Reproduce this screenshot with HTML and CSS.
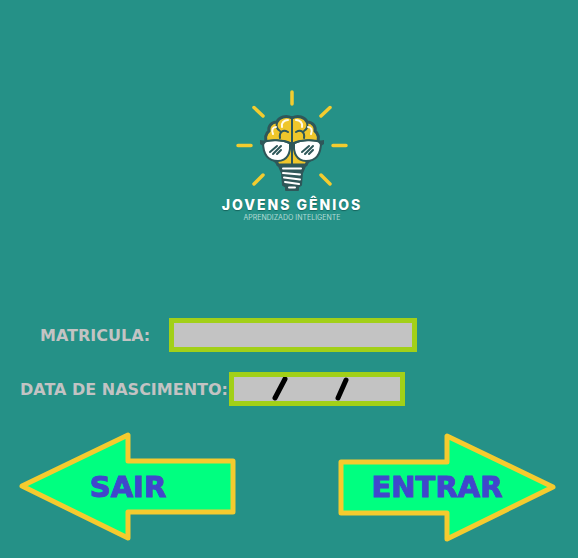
FILE: index.html
```html
<!DOCTYPE html>
<html lang="pt-BR">
<head>
<meta charset="utf-8">
<meta name="viewport" content="width=device-width, initial-scale=1">
<title>Jovens Gênios</title>
<link rel="stylesheet" href="styles.css">
</head>
<body>
<main class="page">
  <header class="brand">
    <svg class="brand-mark" viewBox="235 89 114 104" aria-hidden="true">
      <path class="rays" d="M292 92V104M254 107.500L263 116M330 107.500L321 116M238 145.500H251M333 145.500H346M254 184L263 175M330 184L321 175"/>
      <path class="brain" d="M292 118C286 115 279 117 277 122C271 122 268 127 269 131C265 134 265 139 267 144L272 159C275 160 277 162 278 165H306C307 162 309 160 312 159L317 144C319 139 319 134 315 131C316 127 313 122 307 122C305 117 298 115 292 118Z"/>
      <path class="fold" d="M292 117V165M288 132C283 129 279 132 280 138M277 123C276 126 277 129 280 131M296 132C301 129 305 132 304 138M307 123C308 126 307 129 304 131"/>
      <path class="shine" d="M282 127C281 123 284 120 288 120M273 134C271 130 273 127 276 127M296 120C300 120 303 123 302 127M308 127C311 127 313 130 311 134"/>
      <path class="base" d="M279 166H305L302 173L301 185L298 187V190H286V187L283 185L282 173Z"/>
      <path class="thread" d="M283 168.500H301M283 173L300 174.500M284 177.500L300 179.500M285 182L299 184"/>
      <path class="tip" d="M289 187.500H295"/>
      <path class="lens" d="M263 142C271 139 283 140 290 143C291 153 287 161 278 161C268 161 263 154 263 142Z"/>
      <path class="lens" d="M321 142C313 139 301 140 294 143C293 153 297 161 306 161C316 161 321 154 321 142Z"/>
      <path class="bridge" d="M260 140L266 141C273 139 284 139 290 142H294C300 139 311 139 318 141L324 140V144L321 146L318 142C309 140 300 141 295 144V149H289V144C284 141 275 140 266 142L263 146L260 144Z"/>
      <path class="glint" d="M270 152L277 146M273 154L281 146M277 154L281 150M302 152L309 146M305 154L313 146M309 154L313 150"/>
    </svg>
    <h1 class="brand-name">JOVENS GÊNIOS</h1>
    <p class="brand-tagline">APRENDIZADO INTELIGENTE</p>
  </header>
  <form class="login">
    <div class="row row-id">
      <label for="matricula">MATRICULA:</label>
      <input class="field field-id" id="matricula" type="text">
    </div>
    <div class="row row-date">
      <label for="nascimento">DATA DE NASCIMENTO:</label>
      <div class="date-box">
        <input class="field" id="nascimento" type="text" inputmode="numeric">
        <svg class="slashes" viewBox="0 0 166 24" aria-hidden="true"><path d="M51 2L41 21M112 3L104 21"/></svg>
      </div>
    </div>
    <div class="actions">
      <button class="arrow arrow-back" type="button">
        <svg viewBox="0 0 216 109" aria-hidden="true"><path d="M2 54L108 3V29H213V80H108V106Z"/></svg>
        <span>SAIR</span>
      </button>
      <button class="arrow arrow-next" type="submit">
        <svg viewBox="0 0 216 109" aria-hidden="true"><path d="M213 55L107 4V30H1V81H107V107Z"/></svg>
        <span>ENTRAR</span>
      </button>
    </div>
  </form>
</main>
</body>
</html>
```
FILE: styles.css
```css
* {
  box-sizing: border-box;
}

body {
  margin: 0;
  background: #259187;
  font-family: "Arial Black", "DejaVu Sans", sans-serif;
}

.page {
  max-width: 640px;
  margin: 0 auto;
  padding: 89px 22px 16px 20px;
}

.brand {
  display: flex;
  flex-direction: column;
  align-items: center;
  padding-left: 8px;
  color: #fff;
  font-family: Inter, "Liberation Sans", sans-serif;
}

.brand-mark {
  width: 114px;
  height: 104px;
  fill: none;
  stroke-linecap: round;
  stroke-linejoin: round;
}

.rays {
  stroke: #f3cc2f;
  stroke-width: 3.5;
}

.brain {
  fill: #efc62b;
  stroke: #2e5759;
  stroke-width: 3;
}

.fold {
  stroke: #2e5759;
  stroke-width: 2;
}

.shine {
  stroke: #fffbe8;
  stroke-width: 2;
}

.base {
  fill: #2e5759;
  stroke: #2e5759;
  stroke-width: 2;
}

.thread,
.tip {
  stroke: #fff;
  stroke-width: 2;
}

.lens {
  fill: #fff;
  stroke: #2e5759;
  stroke-width: 2;
}

.bridge {
  fill: #2e5759;
}

.glint {
  stroke: #2e5759;
  stroke-width: 2;
}

.brand-name {
  margin: 4px 0 0;
  font-size: 14px;
  line-height: 16px;
  font-weight: 800;
  letter-spacing: 2px;
  text-shadow: 0 1px 1px #17665f;
}

.brand-tagline {
  margin: 1px 0 0;
  font-size: 7px;
  line-height: 8px;
  color: #b4dcd6;
}

.login {
  margin-top: 96px;
}

.row {
  display: flex;
  align-items: center;
  margin-bottom: 20px;
  color: #c3c3c3;
  font-size: 16px;
  font-weight: 700;
  white-space: nowrap;
}

.row-id {
  gap: 19px;
  padding-left: 20px;
}

.row-date {
  gap: 1px;
}

.field {
  display: block;
  width: 100%;
  height: 34px;
  padding: 0 8px;
  border: 5px solid #a2d018;
  border-radius: 0;
  background: #c3c3c3;
  font: inherit;
  color: #000;
}

.field-id {
  max-width: 248px;
}

.date-box {
  position: relative;
  width: 176px;
}

.slashes {
  position: absolute;
  inset: 5px;
  fill: none;
  stroke: #000;
  stroke-width: 5;
  stroke-linecap: round;
  pointer-events: none;
}

.actions {
  display: flex;
  justify-content: space-between;
  margin-top: 26px;
}

.arrow {
  display: grid;
  align-items: center;
  width: 216px;
  padding: 0;
  border: 0;
  background: none;
  color: #4146cc;
  font: inherit;
  font-size: 29px;
  font-weight: 700;
  cursor: pointer;
}

.arrow svg,
.arrow span {
  grid-area: 1 / 1;
}

.arrow span {
  -webkit-text-stroke: 1px currentColor;
}

.arrow svg {
  display: block;
  width: 100%;
  overflow: visible;
  fill: #00ff80;
  stroke: #f5cb2e;
  stroke-width: 5;
  stroke-linejoin: round;
}

.arrow-next span {
  padding-right: 22px;
}
```
